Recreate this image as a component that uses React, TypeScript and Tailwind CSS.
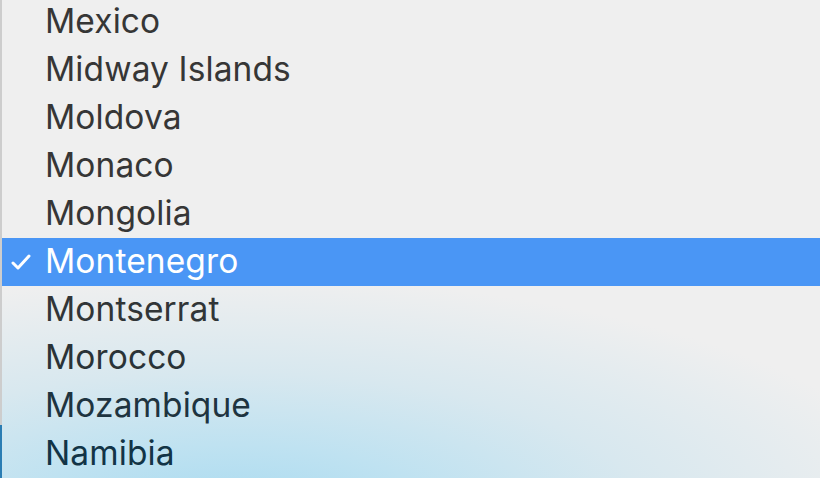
import React from 'react';

const countries = [
  'Mexico',
  'Midway Islands',
  'Moldova',
  'Monaco',
  'Mongolia',
  'Montenegro',
  'Montserrat',
  'Morocco',
  'Mozambique',
  'Namibia',
];

const selected = 'Montenegro';

// text picks up the vibrancy tint towards the bottom
const textColors = [
  'text-[#363636]',
  'text-[#363636]',
  'text-[#363636]',
  'text-[#363636]',
  'text-[#363636]',
  'text-white',
  'text-[#313537]',
  'text-[#2a3337]',
  'text-[#1e3440]',
  'text-[#123446]',
];

const Check = () => (
  <svg width="22" height="18" viewBox="0 0 22 18" fill="none" className="shrink-0">
    <path d="M3 10 L8 15 L19 3" stroke="white" strokeWidth="3" strokeLinecap="round" strokeLinejoin="round" />
  </svg>
);

export default function App() {
  return (
    <div className="w-[820px] h-[478px] overflow-hidden flex bg-[#efefef] bg-[radial-gradient(ellipse_85%_50%_at_28%_108%,#a7daf0_0%,#bfe2f1_30%,#d8e8ef_60%,transparent_100%)]">
      {/* window edge */}
      <div className="w-[2px] shrink-0 flex flex-col">
        <div className="flex-1 bg-[#cdcdcd]" />
        <div className="h-[53px] bg-[#2b7db3]" />
      </div>

      <ul className="flex-1 flex flex-col mt-[-2px] font-['Inter','Helvetica_Neue',sans-serif]">
        {countries.map((name, i) => {
          const isSel = name === selected;
          return (
            <li
              key={name}
              className={`h-[48px] shrink-0 flex items-center ${isSel ? 'bg-[#4a96f5]' : ''}`}
            >
              <div className="w-[43px] shrink-0 flex items-center justify-start pl-[8px]">
                {isSel && <Check />}
              </div>
              <span className={`text-[33.5px] leading-none tracking-[0.1px] ${textColors[i]}`}>{name}</span>
            </li>
          );
        })}
      </ul>
    </div>
  );
}
